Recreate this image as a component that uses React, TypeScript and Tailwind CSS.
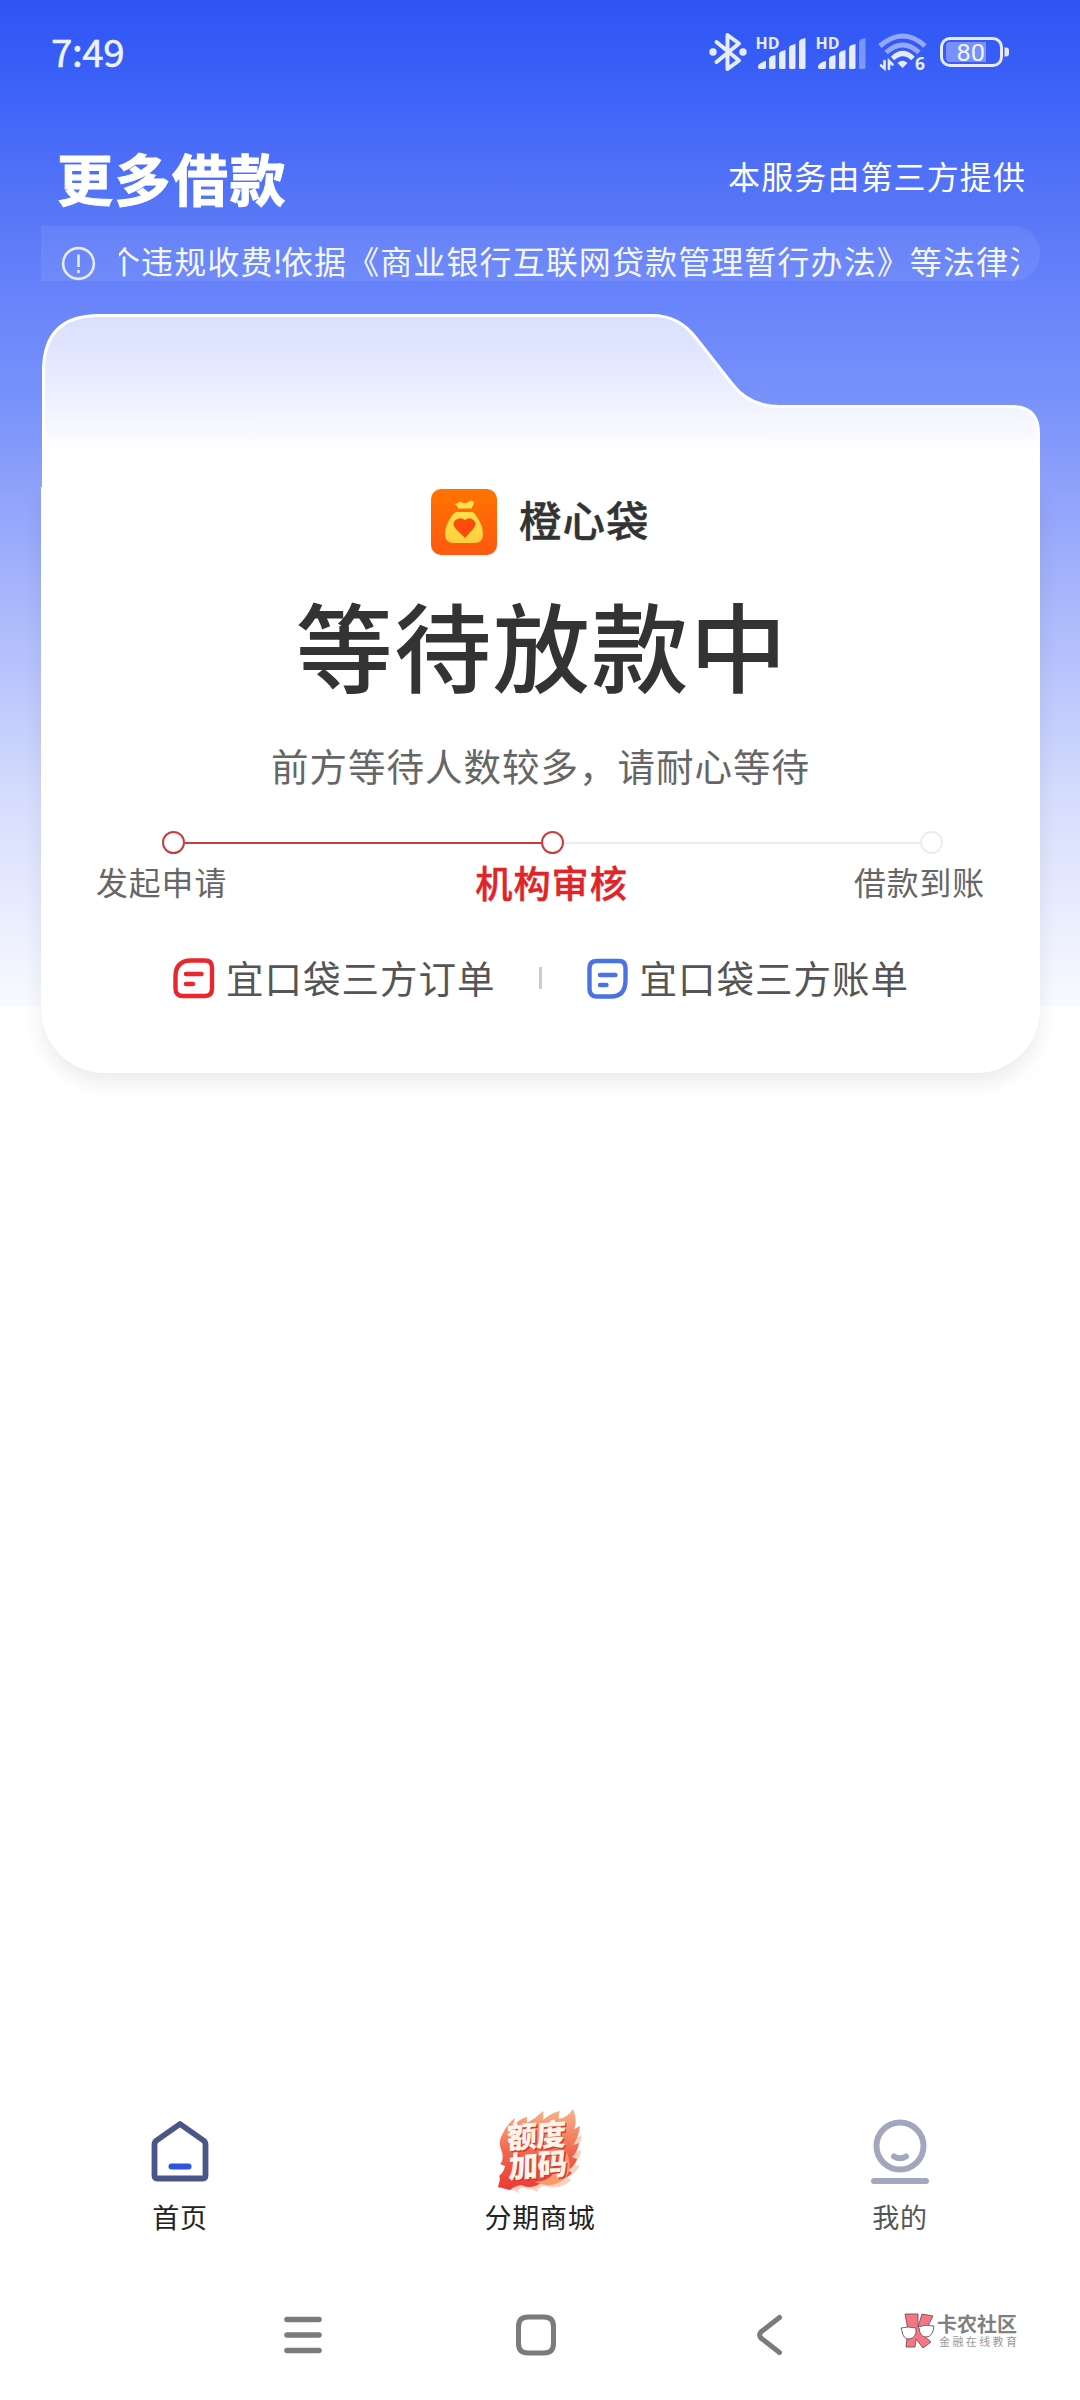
import React from "react";

function Signal({ weak }: { weak?: boolean }) {
  return (
    <svg className="block h-[36px] w-[52px] overflow-visible" viewBox="0 0 52 36">
      <text x="-0.500" y="14.500" fontSize="16" fontWeight="700" fill="#e6ebff" fontFamily="Open Sans, sans-serif" textLength="24" lengthAdjust="spacingAndGlyphs">HD</text>
      <g fill="#e6ebff">
        <path d="M2 32c0-2 6-5 8-5v6q0 2-1.500 2h-5q-1.500 0-1.500-2z" />
        <path d="M13 25q0-3 6.500-4v12.500q0 1.500-1.500 1.500h-3.500q-1.500 0-1.500-1.500z" />
        <path d="M23 20q0-3 6.500-4v17.500q0 1.500-1.500 1.500h-3.500q-1.500 0-1.500-1.500z" />
        <path d="M33 14q0-3 6.500-4v23.500q0 1.500-1.500 1.500h-3.500q-1.500 0-1.500-1.500z" />
        <path opacity={weak ? 0.4 : 1} d="M43 8q0-3 6.500-4v29.500q0 1.500-1.500 1.500h-3.500q-1.500 0-1.500-1.500z" />
      </g>
    </svg>
  );
}

function StatusBar() {
  return (
    <div className="flex h-[104px] shrink-0 items-center pl-[51px] pr-[70px]">
      <span className="mb-[5px] text-[38.500px] leading-[40px] tracking-[-0.400px] text-[#eef2ff] [-webkit-text-stroke:0.500px_#eef2ff]">7:49</span>
      <div className="ml-auto flex items-center">
        <svg className="block h-[40px] w-[38px]" viewBox="0 0 38 40" fill="none" stroke="#e6ebff" strokeWidth="4" strokeLinejoin="round" strokeLinecap="round">
          <path d="M7.500 10 30 28.500 18.500 37V3L30 11.500 7.500 30" />
          <circle cx="4" cy="20" r="1.700" fill="#e6ebff" />
          <circle cx="34" cy="20" r="1.700" fill="#e6ebff" />
        </svg>
        <div className="ml-[9px]"><Signal /></div>
        <div className="ml-[8px]"><Signal weak /></div>
        <svg className="ml-[10px] block h-[38px] w-[50px] overflow-visible" viewBox="0 0 50 38" fill="none">
          <path d="M2 13Q25-7 47 13" stroke="#94a8ff" strokeWidth="5" />
          <path d="M8 19.500Q25 4.500 41 19.500" stroke="#94a8ff" strokeWidth="5" />
          <path d="M14.500 25.500Q25 15.500 35 25.500" stroke="#e6ebff" strokeWidth="5" />
          <path d="M19.500 30q5-4.500 10 0l-5 5z" fill="#e6ebff" />
          <path d="M6.500 28v7.500L3 32.500M11 36V28l3.500 3.500" stroke="#e6ebff" strokeWidth="2.600" strokeLinecap="round" />
          <text x="37" y="36.500" fontSize="17.500" fontWeight="700" fill="#e6ebff" fontFamily="Open Sans, sans-serif">6</text>
        </svg>
        <svg className="ml-[12px] block h-[32px] w-[70px] overflow-visible" viewBox="0 0 70 32" fill="none">
          <rect x="1.500" y="2.500" width="60" height="27" rx="8.500" stroke="#e6ebff" strokeWidth="3" />
          <path d="M10 6h36v20H10q-4 0-4-4V10q0-4 4-4z" fill="#7890fb" />
          <path d="M64.500 11.500h1.500q3 0 3 3v3q0 3-3 3h-1.500z" fill="#e6ebff" />
          <text x="16.500" y="24.500" fontSize="23.500" fill="#f2f5ff" fontFamily="Roboto, sans-serif" textLength="28.500" lengthAdjust="spacingAndGlyphs">80</text>
        </svg>
      </div>
    </div>
  );
}

function Notice() {
  return (
    <div className="ml-[41px] flex h-[55px] w-[999px] shrink-0 items-center rounded-r-full bg-white/[0.07] pl-[20px] pr-[21px] pt-[20px]">
      <svg className="block size-[35px] shrink-0" viewBox="0 0 35 35" fill="none" stroke="#e6ebff" strokeWidth="2.600">
        <circle cx="17.500" cy="17.500" r="15.400" />
        <path d="M17.500 8.500v12.500M17.500 24v3" />
      </svg>
      <div className="mb-[7px] ml-[23px] h-[50px] flex-1 self-center overflow-hidden whitespace-nowrap text-[32px] leading-[50px] tracking-[1.100px] text-[#f4f7ff]">
        <span className="-ml-[11px]">个违规收费</span>
        <span className="-ml-[1px] -mr-[3px]">!</span>
        <span>依据《商业银行互联网贷款管理暂行办法》等法律法规</span>
      </div>
    </div>
  );
}

function FolderTop() {
  return (
    <svg className="absolute left-0 top-0 block h-[174px] w-[999px]" viewBox="0 0 999 174" fill="none">
      <defs>
        <linearGradient id="folder" x1="0" y1="0" x2="0" y2="174" gradientUnits="userSpaceOnUse">
          <stop offset="0" stopColor="#d9dffd" />
          <stop offset="0.4" stopColor="#e9edff" />
          <stop offset="0.8" stopColor="#fff" />
        </linearGradient>
      </defs>
      <path
        d="M2.500 180V57Q2.500 1.500 58 1.500H611Q638 1.500 655 24L692 71Q709 92.500 738 92.500H971Q997.500 92.500 997.500 119V180"
        fill="url(#folder)"
        stroke="#fff"
        strokeWidth="3"
      />
    </svg>
  );
}

function BrandIcon() {
  return (
    <svg className="block size-[66px]" viewBox="0 0 66 66">
      <defs>
        <linearGradient id="brandBg" x1="0" y1="0" x2="0" y2="1">
          <stop offset="0" stopColor="#ff7400" />
          <stop offset="1" stopColor="#fe5812" />
        </linearGradient>
        <linearGradient id="brandBag" x1="0" y1="0" x2="0" y2="1">
          <stop offset="0" stopColor="#ffe04a" />
          <stop offset="1" stopColor="#ffcf3c" />
        </linearGradient>
      </defs>
      <rect width="66" height="66" rx="10" fill="url(#brandBg)" />
      <path d="M23 15q3 0 6-2.500 2 1.500 4.500 1.500t4.500-1.500q2-1.500 4-.5 1.500 1 .5 3.500l-2 4H27q0-3-4-4.500z" fill="#ffe04a" />
      <path d="M26 23h15q2 0 3.500 3 7.500 10 7.500 19 0 9-9 9H23q-9 0-9-9 0-9 7.500-19 2-3 4.500-3z" fill="url(#brandBag)" />
      <path d="M34 49 24.500 39.500q-4-5 0-8.500 5-3.500 9.500 0 4.500-3.500 8.500 0 4 3.500 0 8.500z" fill="#fb4d09" />
    </svg>
  );
}

function Dot({ active }: { active?: boolean }) {
  return <div className={active ? "size-[23px] shrink-0 rounded-full border-2 border-[#cb3a3e]" : "size-[23px] shrink-0 rounded-full border-2 border-[#ededed]"} />;
}

function LoanCard() {
  return (
    <section className="relative ml-[41px] mt-[33px] h-[759px] w-[999px] shrink-0">
      <div className="absolute inset-x-0 bottom-0 top-[173px] rounded-b-[64px] bg-white shadow-[0_10px_20px_rgba(0,0,0,0.08)]" />
      <FolderTop />
      <div className="relative flex flex-col pt-[175px]">
        <div className="flex h-[66px] items-center pl-[390px]">
          <BrandIcon />
          <span className="mb-[7px] ml-[22px] text-[42.500px] font-medium leading-[48px] tracking-[1px] text-[#333] [-webkit-text-stroke:0.400px_#333]">橙心袋</span>
        </div>
        <h1 className="mt-[39px] whitespace-nowrap pl-[3px] text-center text-[97px] font-medium leading-[98px] tracking-[1.500px] text-[#333]">等待放款中</h1>
        <p className="mt-[53px] text-center text-[37.500px] leading-[40px] tracking-[1px] text-[#666]">前方等待人数较多，请耐心等待</p>
        <div className="mt-[46px] flex h-[23px] items-center pl-[121px] pr-[97px]">
          <Dot active />
          <div className="h-[2px] flex-1 bg-[#cb3a3e]" />
          <Dot active />
          <div className="h-[2px] flex-1 bg-[#ededed]" />
          <Dot />
        </div>
        <div className="mt-[7px] flex h-[40px] items-center whitespace-nowrap pl-[55px] text-[31.800px] leading-[40px] tracking-[1px] text-[#666]">
          <span>发起申请</span>
          <span className="ml-[248px] mt-[2px] text-[37.200px] font-medium text-[#e02529] [-webkit-text-stroke:0.400px_#e02529]">机构审核</span>
          <span className="ml-[226px]">借款到账</span>
        </div>
        <div className="mt-[56px] flex h-[42px] items-center whitespace-nowrap pl-[132px] text-[37.500px] leading-[42px] tracking-[1px] text-[#555]">
          <svg className="block h-[42px] w-[42px]" viewBox="0 0 42 42" fill="none" stroke="#e8282d" strokeWidth="4.400" strokeLinecap="round">
            <path d="M18 3.500H32Q39 3.500 39 10.500V31.500Q39 39 32 39H10Q2.500 39 2.500 31.500V19.500Q2.500 3.500 18 3.500z" />
            <path d="M13 17H28.500M13 27H20" />
          </svg>
          <span className="mb-[2px] ml-[11px]">宜口袋三方订单</span>
          <span className="ml-[43px] h-[22px] w-[3px] bg-[#ccc]" />
          <svg className="ml-[45px] block h-[42px] w-[42px]" viewBox="0 0 42 42" fill="none" stroke="#4a72e2" strokeWidth="4.400" strokeLinecap="round">
            <path d="M10 4H32Q38.500 4 38.500 11V23Q38.500 39.500 24 39.500H10Q2.500 39.500 2.500 32V11Q2.500 4 10 4z" />
            <path d="M13 18H28.500M13 28H19.500" />
          </svg>
          <span className="mb-[2px] ml-[11px]">宜口袋三方账单</span>
        </div>
      </div>
    </section>
  );
}

function FlameBadge() {
  return (
    <svg className="block h-[90px] w-[90px] overflow-visible" viewBox="0 0 90 90">
      <defs>
        <linearGradient id="flame" x1="0" y1="0" x2="0" y2="1">
          <stop offset="0" stopColor="#f9b48a" />
          <stop offset="0.5" stopColor="#f26a50" />
          <stop offset="1" stopColor="#ea3a34" />
        </linearGradient>
      </defs>
      <path d="M10 82q10-1 14 4-2-5 3-6 10 0 15 4 0-5 8-6 16 5 27-7-4 1-4-2 9-5 12-12-4 2-5-1 6-7 6-14l-5 2q5-9 6-17l-6 3 3-10z" fill="#fbd0c0" />
      <path d="M3 79q3-9 1-11 5-4 6-10l-5-2q4-3 2-12Q2 34 8 25q4-9 12-15l-2 8q6-7 14-9l0 6q9-5 16-12 1 5 0 9 8-7 17-9-2 4-1 8 9-2 14-10 5 12 1 20l6-3q-1 11-7 19l6-2q-2 10-7 14l5 2q-3 8-9 11l4 3q-7 7-14 6-8 8-17 4-10 7-20 2-8 2-11 5z" fill="url(#flame)" />
      <path d="M40 74q16-1 20-12 9-3 12-18 6 18-2 26-12 12-30 4z" fill="#fa9a6c" />
      <g transform="rotate(-4 45 45) skewX(-5)" fontFamily="Noto Sans CJK SC, sans-serif" fontWeight="900" fontSize="30" strokeLinejoin="round">
        <g fill="#d93a2c">
          <text x="17" y="40" textLength="60">额度</text>
          <text x="19" y="69.500" textLength="60">加码</text>
        </g>
        <g fill="#fff5ea">
          <text x="15.500" y="38.500" textLength="60">额度</text>
          <text x="17.500" y="68" textLength="60">加码</text>
        </g>
      </g>
    </svg>
  );
}

function TabBar() {
  return (
    <nav className="grid h-[140px] w-[1080px] shrink-0 grid-cols-3 text-[27px] leading-[32px] tracking-[0.800px] text-[#222]">
      <div className="flex flex-col items-center">
        <svg className="mt-[13px] block h-[66px] w-[60px]" viewBox="0 0 60 66" fill="none" strokeLinecap="round" strokeLinejoin="round">
          <path d="M30 6 53.500 22.500Q55.500 24 55.500 26.500V57.500Q55.500 60.500 52.500 60.500H7.500Q4.500 60.500 4.500 57.500V26.500Q4.500 24 6.500 22.500z" stroke="#4a5688" strokeWidth="5.800" />
          <path d="M21.500 48.500H38.500" stroke="#2f54e0" strokeWidth="6" />
        </svg>
        <span className="mt-[17px]">首页</span>
      </div>
      <div className="flex flex-col items-center">
        <div className="mt-[3px]"><FlameBadge /></div>
        <span className="mt-[3px]">分期商城</span>
      </div>
      <div className="flex flex-col items-center text-[#555]">
        <svg className="mt-[14px] block h-[66px] w-[60px]" viewBox="0 0 60 66" fill="none" stroke="#a3a7be" strokeWidth="6" strokeLinecap="round">
          <circle cx="30" cy="27" r="23.500" />
          <path d="M24 37.500Q30 41 36 37.500M4 62H56" />
        </svg>
        <span className="mt-[16px]">我的</span>
      </div>
    </nav>
  );
}

function SystemNav() {
  return (
    <div className="flex h-[80px] shrink-0 items-center pl-[283px]">
      <svg className="block h-[42px] w-[40px]" viewBox="0 0 40 42" stroke="#7b7b7b" strokeWidth="5.600" strokeLinecap="round">
        <path d="M4 5.500H36M4 21H36M4 36.500H36" />
      </svg>
      <svg className="ml-[192px] block h-[42px] w-[42px]" viewBox="0 0 42 42" fill="none" stroke="#7b7b7b" strokeWidth="5">
        <path d="M13 3H29Q38.500 3 38.500 12.500V29.500Q38.500 39 29 39H13Q3.500 39 3.500 29.500V12.500Q3.500 3 13 3z" />
      </svg>
      <svg className="ml-[198px] block h-[42px] w-[30px]" viewBox="0 0 30 42" fill="none" stroke="#7b7b7b" strokeWidth="5" strokeLinecap="round">
        <path d="M24.500 3.500 6.500 17.500Q2.500 21 6.500 24.500L24.500 38.500" />
      </svg>
      <div className="mb-[9px] ml-[115px] flex items-center">
        <svg className="block h-[36px] w-[35px]" viewBox="0 0 35 36" stroke="#6a5558" strokeWidth="0.900">
          <path d="M5 1h13v13l4-13 11 2-6 12q-3 5-5 6l9 8-8 6-7-9-1 8H6l2-17z" fill="#f87684" />
          <path d="M1 15q7-2 15 0 1 10-7 11-6 0-7-8zM18 14q7-3 16-1-1 11-8 11-6 0-7-9z" fill="#fff" />
        </svg>
        <div className="ml-[2px] flex flex-col whitespace-nowrap">
          <span className="text-[20px] font-bold leading-[20px] text-[#808080]">卡农社区</span>
          <span className="ml-[2px] mt-[1px] text-[11px] leading-[12px] tracking-[2.400px] text-[#999]">金融在线教育</span>
        </div>
      </div>
    </div>
  );
}

export default function App() {
  return (
    <div className="flex h-[2400px] w-[1080px] flex-col overflow-hidden bg-white bg-[linear-gradient(180deg,#2d53f4_0px,#3f64f8_100px,#5575f7_200px,#6984fa_300px,#7892fa_400px,#94a5fb_510px,#b4c0fc_650px,#d6ddfd_800px,#f8f9ff_1000px,#fafbff_1006px,#fff_1007px)] font-['Noto_Sans_CJK_SC',sans-serif]">
      <StatusBar />
      <header className="flex h-[122px] shrink-0 items-center justify-between whitespace-nowrap pl-[57px] pr-[54px] pt-[24px]">
        <h1 className="text-[56px] font-bold leading-[60px] tracking-[1.500px] text-white [-webkit-text-stroke:1px_#fff]">更多借款</h1>
        <span className="mb-[4px] text-[32px] leading-[40px] tracking-[1.100px] text-white">本服务由第三方提供</span>
      </header>
      <Notice />
      <LoanCard />
      <div className="flex-1" />
      <TabBar />
      <div className="h-[50px] shrink-0" />
      <SystemNav />
      <div className="h-[25px] shrink-0" />
    </div>
  );
}
